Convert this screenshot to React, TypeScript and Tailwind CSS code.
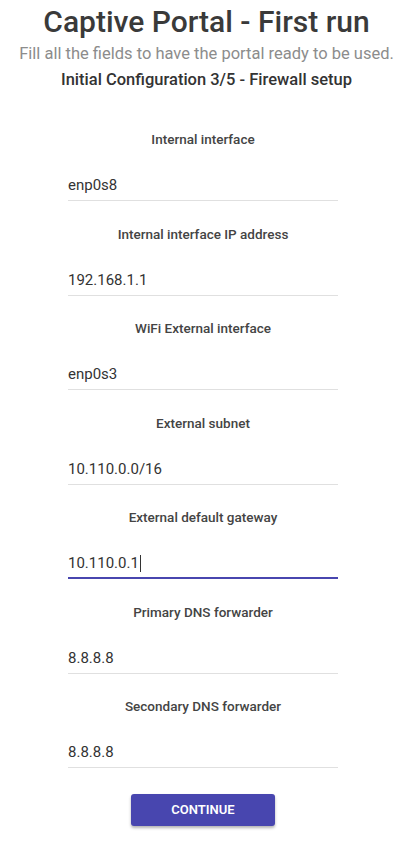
import React from "react";

const fields = [
  { label: "Internal interface", value: "enp0s8" },
  { label: "Internal interface IP address", value: "192.168.1.1" },
  { label: "WiFi External interface", value: "enp0s3" },
  { label: "External subnet", value: "10.110.0.0/16" },
  { label: "External default gateway", value: "10.110.0.1", focused: true },
  { label: "Primary DNS forwarder", value: "8.8.8.8" },
  { label: "Secondary DNS forwarder", value: "8.8.8.8" },
];

export default function App() {
  return (
    <div className="min-h-[850px] bg-white font-['Roboto',sans-serif] text-[#333]">
      <header className="flex flex-col items-center pt-[3px]">
        <h1 className="text-[30px] leading-[38px] font-medium text-[#3a3a3a]">Captive Portal - First run</h1>
        <p className="mt-[2px] text-[16.5px] leading-[22px] text-[#8c8c8c]">
          Fill all the fields to have the portal ready to be used.
        </p>
        <h2 className="mt-[4px] text-[16.5px] leading-[22px] font-medium text-[#333]">
          Initial Configuration 3/5 - Firewall setup
        </h2>
      </header>

      <form className="ml-[68px] mt-[38px] w-[270px] flex flex-col">
        {fields.map((f) => (
          <div key={f.label} className="flex flex-col mb-[22.5px]">
            <label className="text-center text-[13.5px] leading-[20px] font-medium text-[#444]">{f.label}</label>
            <div
              className={
                f.focused
                  ? "mt-[22px] h-[30px] flex items-center border-b-2 border-[#4846af]"
                  : "mt-[22px] h-[30px] flex items-center border-b border-[#e0e0e0]"
              }
            >
              <span className="text-[15px] text-[#333]">{f.value}</span>
              {f.focused && <span className="ml-[1px] w-px h-[17px] bg-[#333]" />}
            </div>
          </div>
        ))}
        <div className="flex justify-center mt-[3.5px]">
          <button
            type="button"
            className="w-[144px] h-[32px] rounded-[3px] bg-[#4846af] text-white text-[13px] font-semibold uppercase shadow-[0_2px_3px_rgba(0,0,0,0.3)]"
          >
            Continue
          </button>
        </div>
      </form>
    </div>
  );
}
